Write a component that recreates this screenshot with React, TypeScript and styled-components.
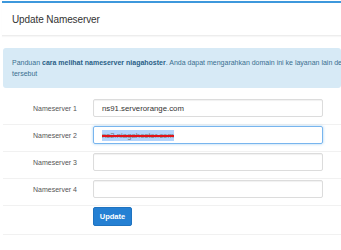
import React from 'react'
import styled, { createGlobalStyle } from 'styled-components'

const GlobalStyle = createGlobalStyle`
  html, body {
    margin: 0;
    padding: 0;
    background: #ffffff;
  }
  body {
    font-family: 'Liberation Sans', Arial, sans-serif;
    color: #333333;
  }
`

const Panel = styled.div`
  margin: 1px 0 0 2px;
  border-top: 2px solid #3d98dc;
  background: #ffffff;
`

const PanelHeader = styled.div`
  height: 32px;
  display: flex;
  align-items: center;
  padding-left: 10px;
  font-size: 10px;
  color: #333333;
  letter-spacing: -0.1px;
  border-bottom: 1px solid #ededed;
  box-shadow: 0 1px 1px rgba(0, 0, 0, 0.03);
`

const PanelBody = styled.div`
  padding: 12px 0 0 1px;
`

const InfoBox = styled.div`
  background: #d7eaf6;
  border-radius: 3px;
  padding: 9px 0 9px 9px;
  font-size: 7px;
  line-height: 11px;
  color: #3a6f90;
  white-space: nowrap;
  overflow: hidden;
`

const InfoLink = styled.b`
  color: #2a5f86;
  font-weight: bold;
`

const Form = styled.div`
  margin-top: 10px;
`

const Row = styled.div<{ $first?: boolean }>`
  display: flex;
  align-items: center;
  padding: 1px 0 7px 0;
  border-top: ${(p) => (p.$first ? 'none' : '1px solid #f1f1f1')};
`

const ButtonRow = styled(Row)`
  padding: 1px 0 8px 0;
  border-bottom: 1px solid #f1f1f1;
`

const Label = styled.div`
  width: 74px;
  padding-right: 16px;
  text-align: right;
  font-size: 7px;
  color: #555555;
`

const Field = styled.div<{ $focused?: boolean }>`
  box-sizing: border-box;
  width: 230px;
  height: 18px;
  display: flex;
  align-items: center;
  padding-left: 8px;
  font-size: 7.8px;
  color: #333333;
  border-radius: 2px;
  border: 1px solid ${(p) => (p.$focused ? '#78b5ee' : '#dcdcdc')};
  box-shadow: ${(p) =>
    p.$focused
      ? '0 0 3px rgba(102, 175, 233, 0.6)'
      : 'inset 0 1px 1px rgba(0, 0, 0, 0.06)'};
`

const Selection = styled.span`
  position: relative;
  background: #b3d4fc;
  color: #7a7a7a;
  padding: 1px 0;
  &::after {
    content: '';
    position: absolute;
    left: 0;
    right: 0;
    top: 48%;
    height: 2px;
    background: #e2141a;
  }
`

const Button = styled.button`
  box-sizing: border-box;
  width: 39px;
  height: 19px;
  padding: 0;
  border: 1px solid #1f73c0;
  border-radius: 2px;
  background: #2580d3;
  color: #ffffff;
  font-family: 'Liberation Sans', Arial, sans-serif;
  font-size: 7.5px;
  font-weight: bold;
`

const Spacer = styled.div`
  width: 90px;
`

const servers = ['ns91.serverorange.com', 'ns2.niagahoster.com', '', '']

export default function App() {
  return (
    <>
      <GlobalStyle />
      <Panel>
        <PanelHeader>Update Nameserver</PanelHeader>
        <PanelBody>
          <InfoBox>
            Panduan <InfoLink>cara melihat nameserver niagahoster</InfoLink>.
            Anda dapat mengarahkan domain ini ke layanan lain dengan mengganti
            nameserver
            <br />
            tersebut
          </InfoBox>
          <Form>
            {servers.map((value, i) => (
              <Row key={i} $first={i === 0}>
                <Label>Nameserver {i + 1}</Label>
                <Field $focused={i === 1}>
                  {i === 1 ? <Selection>{value}</Selection> : value}
                </Field>
              </Row>
            ))}
            <ButtonRow>
              <Spacer />
              <Button>Update</Button>
            </ButtonRow>
          </Form>
        </PanelBody>
      </Panel>
    </>
  )
}
